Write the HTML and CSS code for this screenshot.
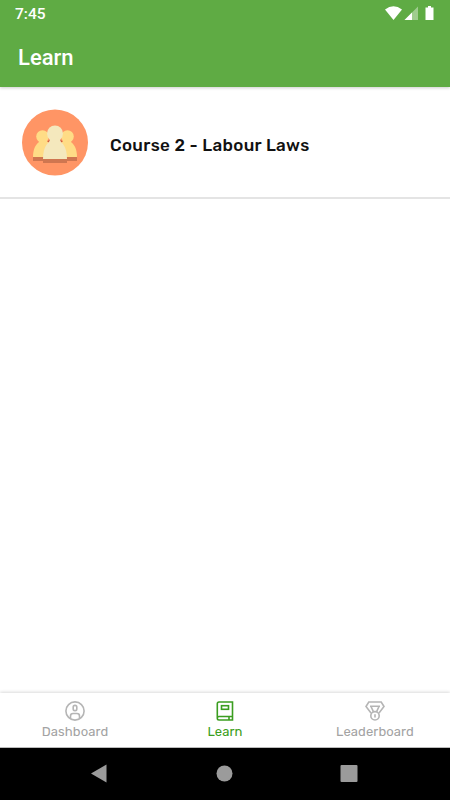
FILE: index.html
```
<!DOCTYPE html>
<html lang="en">
<head>
    <meta charset="UTF-8">
    <meta name="viewport" content="width=device-width, initial-scale=1.0">
    <title>Learn</title>
    <link rel="stylesheet" href="styles.css">
</head>
<body>
    <header class="header">
        <div class="status-bar">
            <span class="time">7:45</span>
            <svg class="status-icons" width="50" height="16" viewBox="0 0 50 16">
                <path d="M0 3.5Q8.5-3 17 3.5L8.5 14Z" fill="#fff"/>
                <path d="M19.5 14L33 .5V14Z" fill="#fff" opacity=".4"/>
                <path d="M19.5 14L27 6.5V14Z" fill="#fff"/>
                <path d="M43 0h3v1.5h2.5V14h-8V1.5H43Z" fill="#fff"/>
            </svg>
        </div>
        <h1>Learn</h1>
    </header>

    <main class="content">
        <div class="course">
            <svg class="course-icon" width="66" height="67" viewBox="0 0 66 67">
                <circle cx="33" cy="33.5" r="33" fill="#ff9565"/>
                <path d="M11 48h44v4H11z" fill="#cf7650"/>
                <g fill="#ffdc86">
                    <circle cx="20.5" cy="27.5" r="6.3"/>
                    <circle cx="45.5" cy="27.5" r="6.3"/>
                    <path d="M17 31h8l8 17H11c0-7 2-12 6-15z"/>
                    <path d="M49 31h-8l-8 17h22c0-7-2-12-6-15z"/>
                </g>
                <path d="M25 33l3-3 4 3zM41 33l-3-3-4 3z" fill="#cf5d3d"/>
                <path d="M21 50h24v4H21z" fill="#cf7650"/>
                <g fill="#f4e8bd">
                    <circle cx="33" cy="24.5" r="8"/>
                    <path d="M28 29h10c0 3 1 4 3 6 3 4 4 9 4 15H21c0-6 1-11 4-15 2-2 3-3 3-6z"/>
                </g>
            </svg>
            <span class="course-title">Course 2 - Labour Laws</span>
        </div>
    </main>

    <nav class="tabs">
        <a class="tab">
            <svg width="20" height="20" viewBox="0 0 20 20">
                <circle cx="10" cy="10" r="9.1"/>
                <rect x="8.2" y="4.4" width="3.6" height="5.2" rx="1.7"/>
                <path d="M5.5 17.5V15q0-2.5 2.5-2.5h4q2.5 0 2.5 2.5v2.5"/>
            </svg>
            <span>Dashboard</span>
        </a>
        <a class="tab active">
            <svg width="20" height="20" viewBox="0 0 20 20">
                <path d="M17.5 15.5V1H4Q2.3 1 2.3 2.7V17.3Q2.3 19 4 19H17.5V15.5H4Q2.3 15.5 2.3 17.3M14 15.5V19"/>
                <rect x="6.5" y="4.7" width="7" height="3.6"/>
            </svg>
            <span>Learn</span>
        </a>
        <a class="tab">
            <svg width="20" height="20" viewBox="0 0 20 20">
                <path d="M6 12L1 5.5 3.8 1H16.2L19 5.5 14 12"/>
                <path d="M5 5.2H15M6 5.5L8.5 10.8M14 5.5L11.5 10.8M10 13.2V16.4"/>
                <circle cx="10" cy="14.8" r="4.2"/>
            </svg>
            <span>Leaderboard</span>
        </a>
    </nav>

    <div class="system-nav">
        <svg width="18" height="20" viewBox="0 0 18 20"><path d="M1 9.5L16.5 .5V18.5Z"/></svg>
        <svg width="18" height="20" viewBox="0 0 18 20"><circle cx="9.5" cy="9.5" r="8"/></svg>
        <svg width="18" height="20" viewBox="0 0 18 20"><rect x=".5" y="1" width="17" height="17" rx="1"/></svg>
    </div>
</body>
</html>
```

FILE: styles.css
```
* {
    box-sizing: border-box;
}
body {
    margin: 0;
    height: 100vh;
    display: flex;
    flex-direction: column;
    background-color: #fff;
    font-family: Rubik, Inter, sans-serif;
    overflow: hidden;
}
.header {
    height: 87px;
    background-color: #5fab44;
    color: #fff;
    font-family: Roboto, sans-serif;
    box-shadow: 0 1px 3px rgba(0, 0, 0, 0.2);
}
.status-bar {
    display: flex;
    justify-content: space-between;
    height: 28px;
    padding: 6px 15px 0;
}
.time {
    font-size: 15.5px;
    line-height: 17px;
    font-weight: 500;
}
h1 {
    margin: 15px 18px 0;
    font-size: 22px;
    line-height: 30px;
    font-weight: 500;
}
.content {
    flex: 1;
}
.course {
    display: flex;
    align-items: center;
    gap: 22px;
    height: 112px;
    padding: 0 22px;
    border-bottom: 2px solid #e4e4e4;
}
.course-title {
    font-size: 17px;
    font-weight: 500;
    letter-spacing: 0.34px;
    color: #111;
    padding-top: 5px;
}
.tabs {
    display: flex;
    height: 55px;
    background-color: #fff;
    border-bottom: 1px solid #bbb;
    box-shadow: 0 -1px 3px rgba(0, 0, 0, 0.15);
}
.tab {
    flex: 1;
    display: flex;
    flex-direction: column;
    align-items: center;
    gap: 3px;
    padding-top: 8px;
    font-size: 13px;
    font-weight: 400;
    line-height: 16px;
    letter-spacing: 0.12px;
    color: #a3a3a3;
}
.tab svg {
    fill: none;
    stroke: #b5b5b5;
    stroke-width: 1.6;
}
.tab.active {
    color: #3b9e20;
}
.active svg {
    stroke: #3b9e20;
}
.system-nav {
    display: flex;
    justify-content: space-between;
    height: 52px;
    padding: 16px 92px 0 90px;
    background-color: #000;
    fill: #9b9b9b;
}
```
